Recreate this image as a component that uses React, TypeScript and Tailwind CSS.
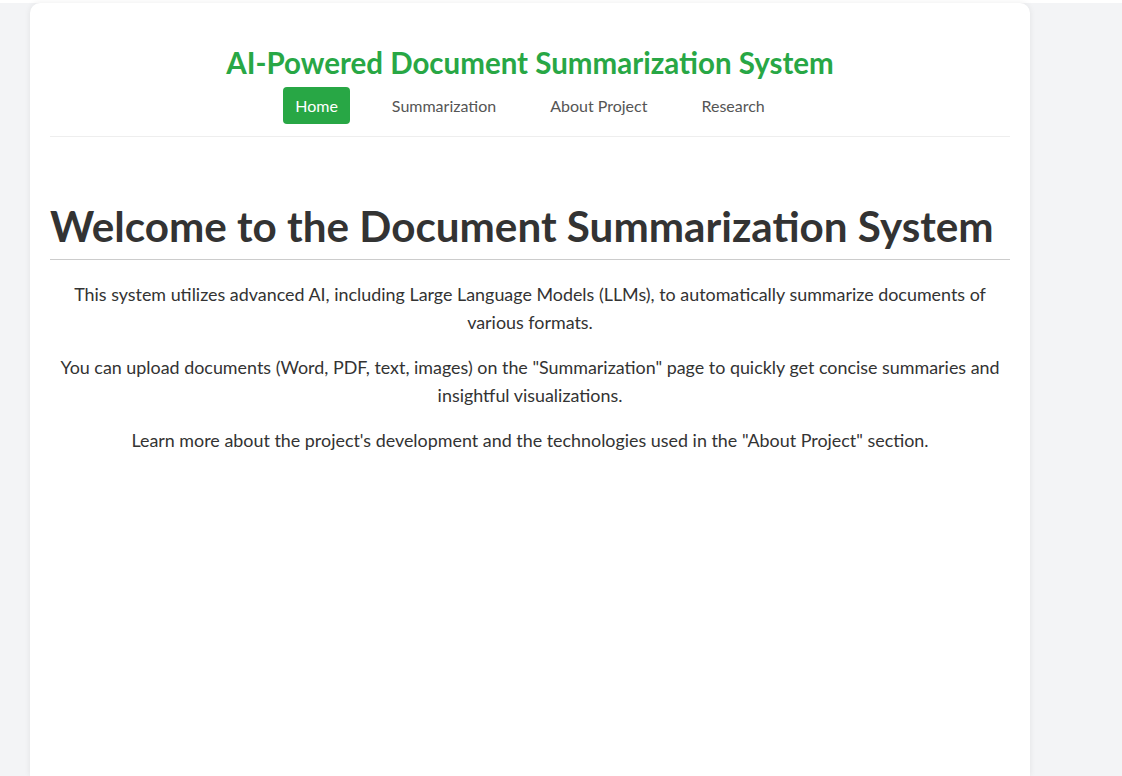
const navItems = ["Home", "Summarization", "About Project", "Research"];

export default function App() {
  return (
    <div className="min-h-[776px] bg-[#f3f4f6] font-['Lato',sans-serif] text-[#333]">
      <div className="ml-[30px] w-[1000px] min-h-[773px] mt-[3px] bg-white rounded-t-[10px] shadow-[0_0_6px_rgba(0,0,0,0.08)] px-5 pt-[42px]">
        <header className="border-b border-[#eee] pb-3 text-center">
          <h1 className="text-[29.5px] leading-[36px] font-bold text-[#28a745]">
            AI-Powered Document Summarization System
          </h1>
          <nav className="mt-[6px] flex justify-center gap-[30px]">
            {navItems.map((item, i) => (
              <a
                key={item}
                className={`px-3 py-2 rounded text-[16px] leading-[21px] ${
                  i === 0 ? "bg-[#28a745] text-white" : "text-[#555]"
                }`}
              >
                {item}
              </a>
            ))}
          </nav>
        </header>

        <main className="pt-[63px]">
          <h2 className="text-[42.2px] leading-[52px] font-bold text-[#333] border-b border-[#ccc] pb-[7px]">
            Welcome to the Document Summarization System
          </h2>
          <div className="mt-[20px] text-center text-[17.9px] leading-[28px] flex flex-col gap-[17px]">
            <p>
              This system utilizes advanced AI, including Large Language Models (LLMs), to automatically
              summarize documents of various formats.
            </p>
            <p>
              You can upload documents (Word, PDF, text, images) on the "Summarization" page to quickly get
              concise summaries and insightful visualizations.
            </p>
            <p>
              Learn more about the project's development and the technologies used in the "About Project"
              section.
            </p>
          </div>
        </main>
      </div>
    </div>
  );
}
